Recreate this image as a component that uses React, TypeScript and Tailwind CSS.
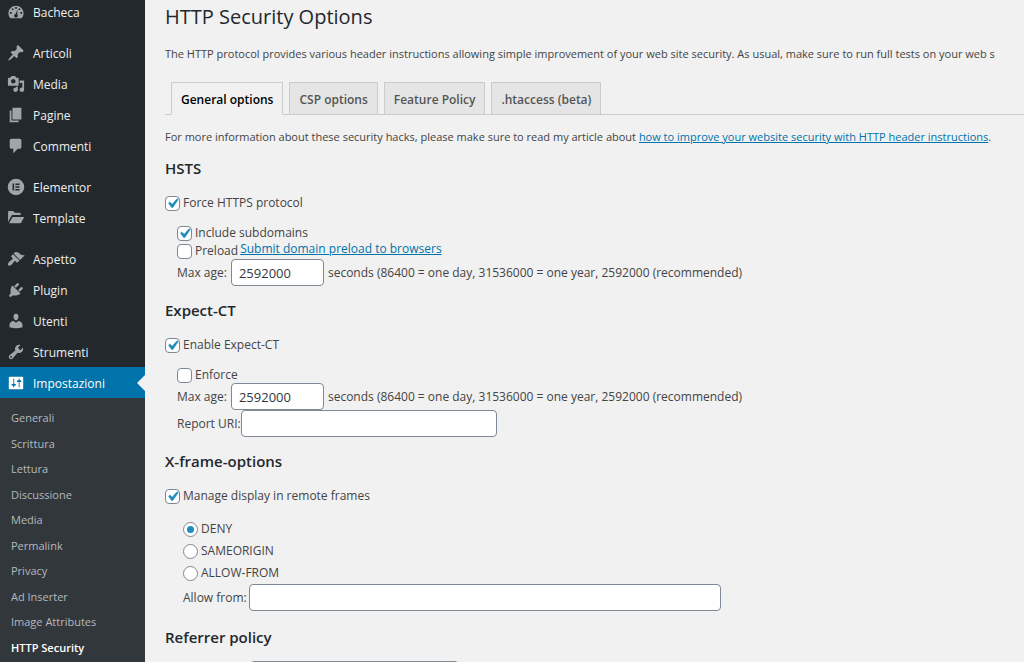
import type { ReactNode } from 'react';
import clsx from 'clsx';

type MenuItem = { label: string; icon: ReactNode; gapBefore?: boolean };

const menu: MenuItem[] = [
  {
    label: 'Bacheca',
    icon: (
      <path
        fillRule="evenodd"
        d="M3.8 17h12.4c1.4-1.6 2.2-3.600 2.200-5.700C18.400 6.600 14.600 3 10 3s-8.400 3.600-8.400 8.300c0 2.100.8 4.100 2.200 5.700zM9 4.500h2v2H9zM5.300 6h1.900v1.900H5.300zM12.800 6h1.900v1.900h-1.900zM3.200 10h2v2h-2zM14.800 10h2v2h-2zM11.600 7.400l-.2 5.300c.5.400.7.900.7 1.500 0 1.100-.9 2-2.100 2s-2.100-.9-2.100-2c0-1 .7-1.800 1.600-2z"
      />
    ),
  },
  {
    label: 'Articoli',
    gapBefore: true,
    icon: (
      <path d="M10.440 3.020l1.820-1.820 6.360 6.350-1.830 1.820c-1.050-.68-2.480-.57-3.410.36l-.75.75c-.92.93-1.040 2.350-.35 3.410l-1.830 1.820-2.410-2.410-2.800 2.790c-.42.42-3.380 2.710-3.800 2.290s1.860-3.390 2.280-3.810l2.790-2.790L4.100 9.360l1.830-1.820c1.050.69 2.480.57 3.400-.36l.75-.75c.93-.92 1.050-2.350.36-3.410z" />
    ),
  },
  {
    label: 'Media',
    icon: (
      <path
        fillRule="evenodd"
        d="M13 11V4c0-.55-.45-1-1-1h-1.670L9 1H5L3.670 3H2c-.55 0-1 .45-1 1v7c0 .55.45 1 1 1h10c.55 0 1-.45 1-1zM7 4.500c1.380 0 2.500 1.120 2.500 2.500S8.380 9.500 7 9.500 4.500 8.380 4.500 7 5.620 4.500 7 4.500zM14 6h5v10.500c0 1.380-1.120 2.500-2.500 2.500S14 17.880 14 16.500s1.120-2.500 2.500-2.500c.17 0 .34.020.5.050V9h-3V6zm-4 8.050V13h2v3.500c0 1.380-1.120 2.500-2.500 2.500S7 17.880 7 16.500 8.120 14 9.500 14c.17 0 .34.020.5.050z"
      />
    ),
  },
  { label: 'Pagine', icon: <path d="M6 15V2h10v13H6zm-1 1h8v2H3V5h2v11z" /> },
  {
    label: 'Commenti',
    icon: <path d="M5 2h9c1.100 0 2 .9 2 2v7c0 1.100-.9 2-2 2h-2l-5 5v-5H5c-1.100 0-2-.9-2-2V4c0-1.100.9-2 2-2z" />,
  },
  {
    label: 'Elementor',
    gapBefore: true,
    icon: (
      <path
        fillRule="evenodd"
        d="M10 .8a9.200 9.200 0 1 0 0 18.400A9.200 9.200 0 0 0 10 .8zM6.200 6.200h1.700v7.600H6.200zM9.300 6.200h4.600v1.600H9.300zM9.300 9.200h4.600v1.600H9.300zM9.300 12.200h4.600v1.600H9.300z"
      />
    ),
  },
  {
    label: 'Template',
    icon: <path d="M1.200 14.500V3.200c0-.6.4-1 1-1h4.600l2 2h5.400c.6 0 1 .4 1 1v1.600H6.300c-.6 0-1.100.3-1.400.8zM2.300 15.700L5.900 9.500c.2-.3.5-.5.900-.5h12.400l-3.500 6.200c-.2.300-.5.500-.9.500z" />,
  },
  {
    label: 'Aspetto',
    gapBefore: true,
    icon: (
      <path d="M14.480 11.060L7.410 3.990l1.500-1.500c.5-.56 2.300-.47 3.510.32 1.210.8 1.430 1.280 2.910 2.100 1.180.64 2.450 1.260 4.450.85zm-.71.71L6.700 4.700 4.930 6.470c-.39.39-.39 1.020 0 1.410l1.060 1.060c.39.39.39 1.030 0 1.420-.6.6-1.430 1.110-2.210 1.690-.35.26-.7.53-1.010.84C1.430 14.230.4 16.080 1.400 17.070c.99 1 2.840-.03 4.180-1.360.31-.31.58-.66.85-1.020.57-.78 1.080-1.610 1.690-2.210.39-.39 1.020-.39 1.410 0l1.060 1.060c.39.39 1.020.39 1.410 0z" />
    ),
  },
  {
    label: 'Plugin',
    icon: (
      <path d="M13.110 4.360L9.870 7.600 8 5.730l3.240-3.240c.35-.34 1.050-.2 1.560.32.52.51.66 1.210.31 1.550zm-8 1.770l.91-1.120 9.010 9.010-1.190.84c-.71.71-2.630 1.160-3.820 1.160H6.140L4.900 17.260c-.59.59-1.540.59-2.120 0-.59-.58-.59-1.530 0-2.120l1.240-1.240v-3.880c0-1.130.4-3.190 1.090-3.890zm7.260 3.970l3.240-3.240c.34-.35 1.040-.21 1.550.31.52.51.66 1.210.31 1.550l-3.240 3.250z" />
    ),
  },
  {
    label: 'Utenti',
    icon: (
      <path d="M10 9.250c-2.270 0-2.730-3.440-2.730-3.440C7 4.020 7.820 2 9.970 2c2.160 0 2.980 2.020 2.710 3.810 0 0-.41 3.440-2.680 3.440zm0 2.570L12.720 10c2.390 0 4.520 2.330 4.520 4.530v2.490s-3.650 1.130-7.240 1.130c-3.650 0-7.240-1.130-7.240-1.130v-2.490c0-2.250 1.940-4.480 4.470-4.480z" />
    ),
  },
  {
    label: 'Strumenti',
    icon: (
      <path
        fillRule="evenodd"
        d="M16.680 9.770c-1.340 1.340-3.300 1.670-4.950.99l-5.410 6.520c-.99.99-2.590.99-3.580 0s-.99-2.590 0-3.570l6.520-5.420c-.68-1.650-.35-3.610.99-4.950 1.280-1.280 3.120-1.620 4.720-1.060l-2.890 2.890 2.820 2.820 2.860-2.870c.53 1.580.18 3.390-1.080 4.650zM3.810 16.210c.4.39 1.040.39 1.430 0 .4-.4.4-1.040 0-1.430-.39-.4-1.030-.4-1.430 0-.39.39-.39 1.030 0 1.430z"
      />
    ),
  },
  {
    label: 'Impostazioni',
    icon: (
      <path
        fillRule="evenodd"
        d="M18 16V4c0-.55-.45-1-1-1H3c-.55 0-1 .45-1 1v12c0 .55.45 1 1 1h14c.55 0 1-.45 1-1zM8 11h1c.55 0 1 .45 1 1s-.45 1-1 1H8v1.500c0 .28-.22.5-.5.5s-.5-.22-.5-.5V13H6c-.55 0-1-.45-1-1s.45-1 1-1h1V5.500c0-.28.22-.5.5-.5s.5.22.5.5V11zm5-2h-1c-.55 0-1-.45-1-1s.45-1 1-1h1V5.500c0-.28.22-.5.5-.5s.5.22.5.5V7h1c.55 0 1 .45 1 1s-.45 1-1 1h-1v5.500c0 .28-.22.5-.5.5s-.5-.22-.5-.5V9z"
      />
    ),
  },
];

const submenu = [
  'Generali',
  'Scrittura',
  'Lettura',
  'Discussione',
  'Media',
  'Permalink',
  'Privacy',
  'Ad Inserter',
  'Image Attributes',
  'HTTP Security',
];

const tabs = ['General options', 'CSP options', 'Feature Policy', '.htaccess (beta)'];

function Sidebar() {
  return (
    <nav className="w-[145px] shrink-0 bg-[#23282d]">
      <ul className="-mt-1">
        {menu.map(({ label, icon, gapBefore }) => {
          const current = label === 'Impostazioni';
          return (
            <li key={label} className={clsx(gapBefore && 'mt-[10px]')}>
              <a
                href="#"
                className={clsx(
                  'relative flex h-[31px] items-center gap-2 pl-[7px] text-xs',
                  current ? 'bg-[#0073aa] text-white' : 'text-[#eeeeee]'
                )}
              >
                <svg
                  viewBox="0 0 20 20"
                  className={clsx('size-[18px] shrink-0 fill-current', !current && 'text-[#a0a5aa]')}
                >
                  {icon}
                </svg>
                <span className="pt-0.5">{label}</span>
                {/* Arrow pointing at the open page */}
                {current && (
                  <span className="absolute right-0 top-1/2 -translate-y-1/2 border-y-8 border-r-8 border-y-transparent border-r-[#f1f1f1]" />
                )}
              </a>
            </li>
          );
        })}
      </ul>
      <ul className="h-full bg-[#32373c] pt-2">
        {submenu.map((label) => (
          <li key={label} className="flex items-center odd:h-[25px] even:h-[26px]">
            <a
              href="#"
              className={clsx(
                'pl-[11px] text-[11px]',
                label === 'HTTP Security' ? 'font-semibold text-white' : 'text-[#b4b9be]'
              )}
            >
              {label}
            </a>
          </li>
        ))}
      </ul>
    </nav>
  );
}

function Heading({ id, children }: { id?: string; children: ReactNode }) {
  return (
    <h2 id={id} className="mt-3.5 text-[15px] leading-5 font-semibold text-[#23282d]">
      {children}
    </h2>
  );
}

function Checkbox({ label, checked }: { label: string; checked?: boolean }) {
  return (
    <label className="flex h-5 items-center gap-[3px]">
      <span className="grid">
        <input
          type="checkbox"
          defaultChecked={checked}
          className="peer col-start-1 row-start-1 size-[15px] appearance-none rounded-[4px] border border-[#7e8993] bg-white"
        />
        <svg
          viewBox="0 0 20 20"
          className="pointer-events-none invisible col-start-1 row-start-1 size-[15px] scale-125 fill-[#1e8cbe] stroke-[#1e8cbe] stroke-[0.6] peer-checked:visible"
        >
          <path d="M14.830 4.890l1.340.94-5.810 8.380H9.020L5.780 9.670l1.340-1.250 2.570 2.400z" />
        </svg>
      </span>
      {label}
    </label>
  );
}

function Radio({ label, checked }: { label: string; checked?: boolean }) {
  return (
    <label className="flex h-[22px] items-center gap-[3px]">
      <span className="grid place-items-center">
        <input
          type="radio"
          name="frame-options"
          defaultChecked={checked}
          className="peer col-start-1 row-start-1 size-[15px] appearance-none rounded-full border border-[#7e8993] bg-white"
        />
        <span className="pointer-events-none invisible col-start-1 row-start-1 size-[7px] rounded-full bg-[#1e8cbe] peer-checked:visible" />
      </span>
      {label}
    </label>
  );
}

const fieldClass = 'h-[27px] rounded-[4px] border border-[#7e8993] bg-white px-[7px] text-[13px] text-[#32373c]';

function MaxAge({ id }: { id: string }) {
  return (
    <div className="flex items-center gap-1 whitespace-nowrap">
      <label htmlFor={id}>Max age:</label>
      <input id={id} type="text" defaultValue="2592000" className={clsx(fieldClass, 'w-[93px]')} />
      <span>seconds (86400 = one day, 31536000 = one year, 2592000 (recommended)</span>
    </div>
  );
}

export default function App() {
  return (
    <div className="flex h-screen overflow-hidden bg-[#f1f1f1] font-['Open_Sans','Noto_Sans',sans-serif] text-xs text-[#444444]">
      <Sidebar />

      <main className="min-w-0 flex-1 overflow-hidden pl-5">
        <h1 className="text-xl leading-[34px] text-[#23282d]">HTTP Security Options</h1>
        <p className="mt-[10px] text-[11px] leading-5 whitespace-nowrap">
          The HTTP protocol provides various header instructions allowing simple improvement of your web site
          security. As usual, make sure to run full tests on your web s
        </p>

        <div className="mt-[18px] flex gap-1.5 border-b border-[#cccccc] pl-1.5">
          {tabs.map((tab, i) => (
            <button
              key={tab}
              type="button"
              className={clsx(
                '-mb-px h-[33px] border border-[#cccccc] px-[9px] pt-0.5 text-xs font-semibold whitespace-nowrap',
                i === 0 ? 'border-b-[#f1f1f1] bg-[#f1f1f1] text-black' : 'bg-[#e5e5e5] text-[#555555]'
              )}
            >
              {tab}
            </button>
          ))}
        </div>

        <p className="mt-3.5 text-[11px] leading-[15px] whitespace-nowrap">
          For more information about these security hacks, please make sure to read my article about{' '}
          <a href="#" className="text-[#0073aa] underline">
            how to improve your website security with HTTP header instructions
          </a>
          .
        </p>

        <Heading>HSTS</Heading>
        <div className="mt-[15px]">
          <Checkbox label="Force HTTPS protocol" checked />
          <div className="mt-[10px] pl-3">
            <div className="h-[18px]">
              <Checkbox label="Include subdomains" checked />
            </div>
            <div className="flex h-[18px] gap-0.5">
              <Checkbox label="Preload" />
              <a href="#" className="leading-4 text-[#0073aa] underline">
                Submit domain preload to browsers
              </a>
            </div>
            <MaxAge id="hsts-max-age" />
          </div>
        </div>

        <Heading>Expect-CT</Heading>
        <div className="mt-[15px]">
          <Checkbox label="Enable Expect-CT" checked />
          <div className="mt-[10px] pl-3">
            <div className="h-[18px]">
              <Checkbox label="Enforce" />
            </div>
            <MaxAge id="expect-ct-max-age" />
            <div className="flex items-center whitespace-nowrap">
              <label htmlFor="report-uri">Report URI:</label>
              <input id="report-uri" type="text" className={clsx(fieldClass, 'w-64')} />
            </div>
          </div>
        </div>

        <Heading>X-frame-options</Heading>
        <div className="mt-[15px] pb-0.5">
          <Checkbox label="Manage display in remote frames" checked />
          <div className="mt-3 pl-[18px]">
            <Radio label="DENY" checked />
            <Radio label="SAMEORIGIN" />
            <Radio label="ALLOW-FROM" />
            <div className="flex items-center gap-0.5 whitespace-nowrap">
              <label htmlFor="allow-from">Allow from:</label>
              <input id="allow-from" type="text" className={clsx(fieldClass, 'w-[472px]')} />
            </div>
          </div>
        </div>

        <Heading id="referrer-policy">Referrer policy</Heading>
        <select
          aria-labelledby="referrer-policy"
          className="mt-3.5 ml-[85px] block h-[27px] w-[209px] appearance-none rounded-[4px] border border-[#7e8993] bg-white"
        />
      </main>
    </div>
  );
}
